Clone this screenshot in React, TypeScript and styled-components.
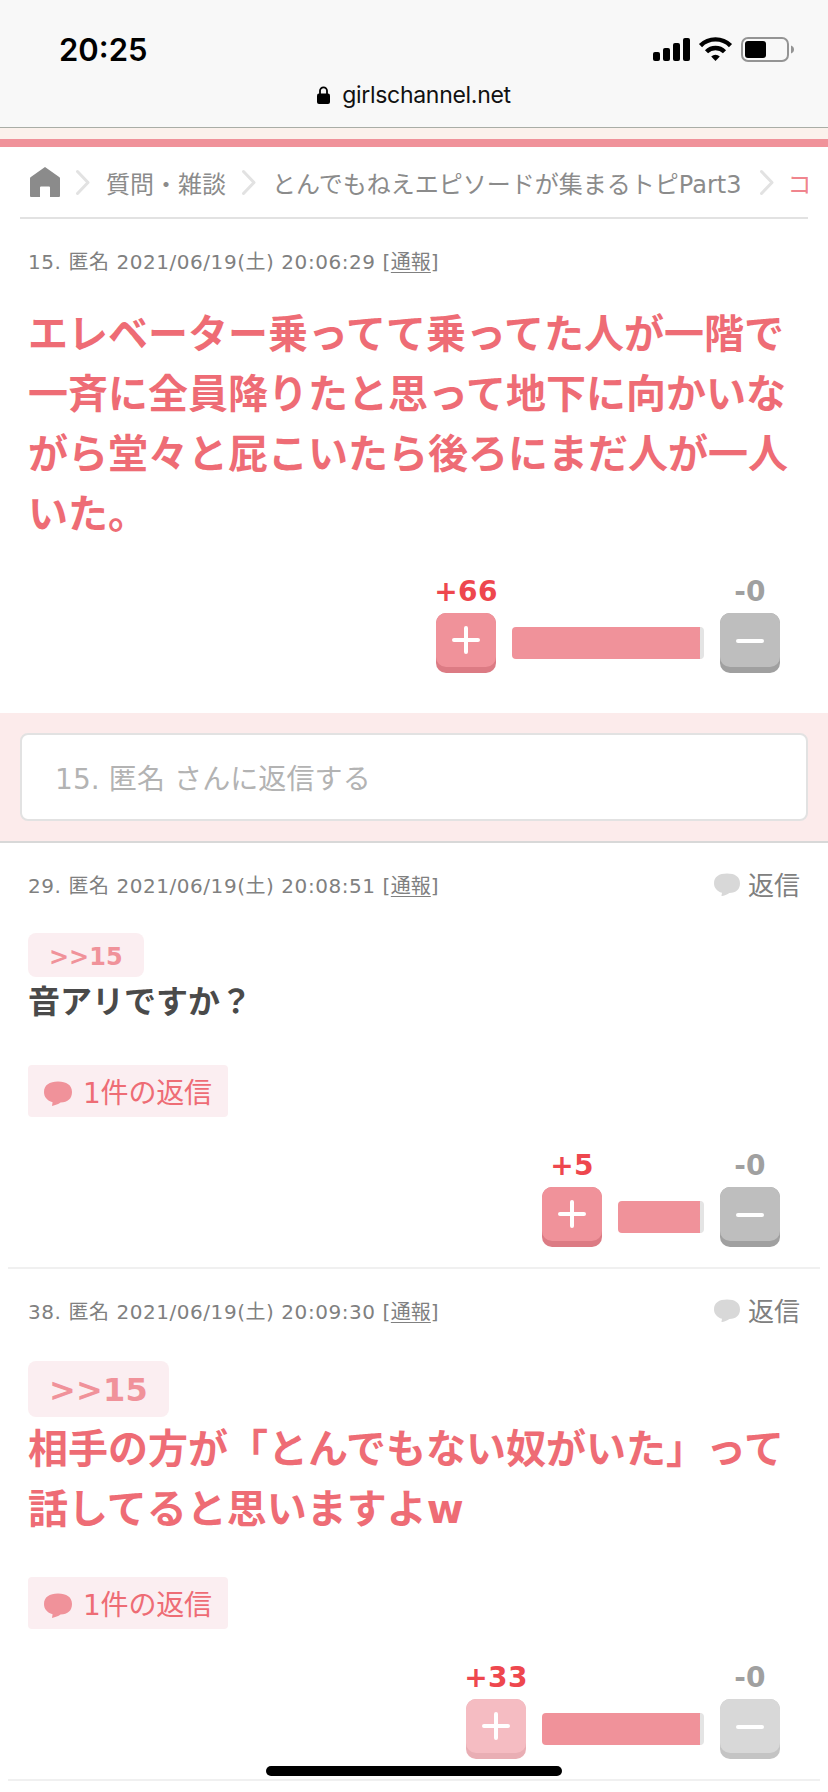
import React from "react";
import styled, { createGlobalStyle } from "styled-components";

const GlobalStyle = createGlobalStyle`
  * { box-sizing: border-box; }
  body {
    margin: 0;
    background: #fff;
    font-family: "DejaVu Sans", "Noto Sans CJK JP", sans-serif;
    -webkit-font-smoothing: antialiased;
  }
`;

const Page = styled.div`
  width: 828px;
  height: 1792px;
  overflow: hidden;
  position: relative;
  background: #fff;
`;

const BrowserHeader = styled.header`
  height: 128px;
  background: #f8f8f8;
  border-bottom: 1px solid #a9ada6;
  font-family: Inter, sans-serif;
  color: #000;
`;

const StatusBar = styled.div`
  height: 72px;
  padding: 30px 33px 0 59px;
  display: flex;
  justify-content: space-between;
  align-items: flex-start;
`;

const Clock = styled.span`
  font-size: 31px;
  font-weight: 600;
  line-height: 40px;
`;

const StatusIcons = styled.svg`
  display: block;
  margin-top: 6px;
`;

const AddressBar = styled.div`
  display: flex;
  justify-content: center;
  align-items: center;
  gap: 12px;
  height: 46px;
  font-size: 23px;
  letter-spacing: -0.3px;
  line-height: 46px;
  color: #111;
`;

const TopStripe = styled.div`
  height: 19px;
  background: #fbf1ec;
  border-bottom: 8px solid #f0929a;
`;

const Breadcrumbs = styled.nav`
  height: 72px;
  margin: 0 20px;
  padding: 0 0 0 10px;
  display: flex;
  align-items: center;
  border-bottom: 2px solid #e2e2e2;
  overflow: hidden;
  white-space: nowrap;
  font-size: 24px;
  line-height: 36px;
  color: #8b8b8b;
`;

const HomeIcon = styled.svg`
  flex: none;
`;

const Crumb = styled.span<{ $current?: boolean }>`
  flex: none;
  padding-top: 5px;
  color: ${(p) => (p.$current ? "#f0858e" : "#8b8b8b")};
`;

const CrumbChevron = styled.svg<{ $before: number; $after: number }>`
  flex: none;
  margin: 0 ${(p) => p.$after}px 0 ${(p) => p.$before}px;
`;

const Comment = styled.article<{ $height: number; $divider?: boolean }>`
  height: ${(p) => p.$height}px;
  margin: 0 8px;
  padding: 28px 20px 0;
  display: flex;
  flex-direction: column;
  align-items: flex-start;
  border-bottom: ${(p) => (p.$divider ? "2px solid #f0f0f0" : "none")};
`;

const MetaRow = styled.div`
  align-self: stretch;
  display: flex;
  justify-content: space-between;
  align-items: center;
  height: 30px;
  color: #808080;
`;

const Meta = styled.span`
  font-size: 20px;
  line-height: 30px;
  letter-spacing: 0.55px;
`;

const ReportLink = styled.a`
  letter-spacing: 0;
  text-decoration: underline;
  text-decoration-thickness: 1px;
  text-underline-offset: 3px;
`;

const ReplyLink = styled.a`
  display: flex;
  align-items: center;
  gap: 8px;
  font-size: 26px;
  line-height: 30px;

  svg {
    margin-bottom: 3px;
  }
`;

const Body = styled.p<{ $large?: boolean; $top: number }>`
  margin: ${(p) => p.$top}px 0 0;
  font-weight: 700;
  white-space: nowrap;
  font-size: ${(p) => (p.$large ? 40 : 32)}px;
  line-height: ${(p) => (p.$large ? 60 : 48)}px;
  color: ${(p) => (p.$large ? "#ee6c75" : "#4a4a4a")};
`;

const Anchor = styled.a<{ $large?: boolean }>`
  margin-top: ${(p) => (p.$large ? 34 : 32)}px;
  height: ${(p) => (p.$large ? 56 : 44)}px;
  padding: 0 21px;
  border-radius: 8px;
  background: #fbeef1;
  color: #f0929a;
  font-weight: 700;
  font-size: ${(p) => (p.$large ? 32 : 24)}px;
  letter-spacing: ${(p) => (p.$large ? 0.2 : 0)}px;
  line-height: ${(p) => (p.$large ? 58 : 48)}px;
`;

const Replies = styled.a<{ $top: number }>`
  margin-top: ${(p) => p.$top}px;
  height: 52px;
  width: 200px;
  padding: 5px 0 0 16px;
  display: flex;
  align-items: center;
  gap: 11px;
  border-radius: 4px;
  background: #fbeef1;
  color: #ee6c75;
  font-size: 28px;
  line-height: 46px;
  letter-spacing: -0.2px;
  white-space: nowrap;
`;

const Votes = styled.div`
  align-self: flex-end;
  margin: auto 20px 0 0;
  display: flex;
  align-items: flex-end;
  gap: 16px;
`;

const VoteColumn = styled.div`
  width: 60px;
  display: flex;
  flex-direction: column;
  align-items: center;
`;

const Count = styled.span<{ $plus?: boolean }>`
  font-size: 28px;
  font-weight: 700;
  line-height: 38px;
  height: 40px;
  letter-spacing: 0.3px;
  white-space: nowrap;
  color: ${(p) => (p.$plus ? "#ee474e" : "#a0a0a0")};
`;

const VoteButton = styled.button<{ $bg: string; $edge: string }>`
  width: 60px;
  height: 60px;
  padding: 0 0 6px;
  border: 0;
  border-radius: 10px;
  background: ${(p) => p.$edge};
  position: relative;
  display: flex;
  align-items: center;
  justify-content: center;

  &::before {
    content: "";
    position: absolute;
    inset: 0 0 6px;
    border-radius: 10px;
    background: ${(p) => p.$bg};
  }

  svg {
    position: relative;
  }
`;

const Meter = styled.div<{ $width: number }>`
  width: ${(p) => p.$width}px;
  height: 32px;
  margin-bottom: 14px;
  border-radius: 4px;
  background: #f0929a;
  border-right: 4px solid #e4e4e4;
`;

const ReplyArea = styled.section`
  height: 130px;
  padding: 20px 20px 0;
  background: #fcebeb;
  border-bottom: 2px solid #d8d8d8;
`;

const ReplyInput = styled.div`
  height: 88px;
  padding: 0 0 0 33px;
  border: 2px solid #e2e2e2;
  border-radius: 8px;
  background: #fff;
  color: #b3b3b3;
  font-size: 28px;
  line-height: 90px;
  letter-spacing: 0.1px;
`;

const HomeIndicator = styled.div`
  position: absolute;
  left: 266px;
  top: 1766px;
  width: 296px;
  height: 10px;
  border-radius: 5px;
  background: #000;
`;

const Bubble = ({ color, width }: { color: string; width: number }) => (
  <svg width={width} height={(width * 25) / 28} viewBox="0 0 28 25">
    <path
      d="M14 0.500C5.500 0.500 0 4 0 11c0 4.800 3 8.600 8.600 10.300L8 25c3.500-.8 6.200-1.700 8.500-3.500C24 21.300 28 17.500 28 11 28 4 22.500 0.500 14 0.500Z"
      fill={color}
    />
  </svg>
);

const Chevron = ({ before = 16, after = 16 }: { before?: number; after?: number }) => (
  <CrumbChevron $before={before} $after={after} width="14" height="26" viewBox="0 0 14 26">
    <path
      d="M1.500 2.500 12 13.500 1.500 24.500"
      fill="none"
      stroke="#e2e2e2"
      strokeWidth="3"
      strokeLinecap="round"
      strokeLinejoin="round"
    />
  </CrumbChevron>
);

const Header = () => (
  <BrowserHeader>
    <StatusBar>
      <Clock>20:25</Clock>
      <StatusIcons width="142" height="27" viewBox="0 0 142 27">
        <rect x="0" y="16" width="7" height="9" rx="2" />
        <rect x="10" y="12" width="7" height="13" rx="2" />
        <rect x="20" y="7" width="7" height="18" rx="2" />
        <rect x="30" y="2" width="7" height="23" rx="2" />
        <g fill="none" stroke="#000" strokeWidth="4.400">
          <path d="M47.500 9.600a21.300 21.300 0 0 1 30 0" />
          <path d="M53.500 15.700a12.800 12.800 0 0 1 18 0" />
        </g>
        <path d="m62.500 25-4.300-4.500a6.200 6.200 0 0 1 8.600 0Z" />
        <rect x="89" y="2" width="46" height="23" rx="6" fill="none" stroke="#949494" strokeWidth="2" />
        <rect x="92" y="5" width="21" height="17" rx="3" />
        <path d="M138 9.500c4 1.200 4 6.800 0 8Z" fill="#949494" />
      </StatusIcons>
    </StatusBar>
    <AddressBar>
      <svg width="13" height="18" viewBox="0 0 13 18">
        <rect y="7.500" width="13" height="10.500" rx="2" />
        <path d="M3 8V4.800a3.500 3.500 0 0 1 7 0V8" fill="none" stroke="#000" strokeWidth="1.800" />
      </svg>
      <span>girlschannel.net</span>
    </AddressBar>
  </BrowserHeader>
);

const MetaLine = ({ no, time, reply }: { no: number; time: string; reply?: boolean }) => (
  <MetaRow>
    <Meta>
      {no}. 匿名 2021/06/19(土) {time} [<ReportLink>通報</ReportLink>]
    </Meta>
    {reply && (
      <ReplyLink>
        <Bubble color="#d8d8d8" width={26} />
        返信
      </ReplyLink>
    )}
  </MetaRow>
);

const VoteRow = ({ plus, meter, voted }: { plus: number; meter: number; voted?: boolean }) => (
  <Votes>
    <VoteColumn>
      <Count $plus>+{plus}</Count>
      <VoteButton $bg={voted ? "#f5bcc2" : "#f0929a"} $edge={voted ? "#e9aeb4" : "#dc7b84"}>
        <svg width="28" height="28" viewBox="0 0 28 28">
          <path d="M2 14H26M14 2V26" stroke="#fff" strokeWidth="4" strokeLinecap="round" />
        </svg>
      </VoteButton>
    </VoteColumn>
    <Meter $width={meter} />
    <VoteColumn>
      <Count>-0</Count>
      <VoteButton $bg={voted ? "#d8d8d8" : "#bebebe"} $edge={voted ? "#c4c4c4" : "#a0a0a0"}>
        <svg width="28" height="28" viewBox="0 0 28 28">
          <path d="M2 15H26" stroke="#fff" strokeWidth="4" strokeLinecap="round" />
        </svg>
      </VoteButton>
    </VoteColumn>
  </Votes>
);

const CommentEnd = styled.div<{ $height: number }>`
  flex: none;
  height: ${(p) => p.$height}px;
`;

export default function App() {
  return (
    <Page>
      <GlobalStyle />
      <Header />
      <TopStripe />
      <Breadcrumbs>
        <HomeIcon width="30" height="30" viewBox="0 0 30 30">
          <path
            d="M15 0 .5 10.200Q0 10.600 0 11.500V29Q0 30 1 30H10V20.500Q10 19.500 11 19.500h8Q20 19.500 20 20.500V30h9Q30 30 30 29v-17.500Q30 10.600 29.500 10.200Z"
            fill="#8b8b8b"
          />
        </HomeIcon>
        <Chevron />
        <Crumb>質問・雑談</Crumb>
        <Chevron />
        <Crumb>とんでもねえエピソードが集まるトピPart3</Crumb>
        <Chevron before={19} after={13} />
        <Crumb $current>コ</Crumb>
      </Breadcrumbs>

      <Comment $height={494}>
        <MetaLine no={15} time="20:06:29" />
        <Body $large $top={27}>
          エレベーター乗ってて乗ってた人が一階で
          <br />
          一斉に全員降りたと思って地下に向かいな
          <br />
          がら堂々と屁こいたら後ろにまだ人が一人
          <br />
          いた。
        </Body>
        <VoteRow plus={66} meter={192} />
        <CommentEnd $height={40} />
      </Comment>

      <ReplyArea>
        <ReplyInput>15. 匿名 さんに返信する</ReplyInput>
      </ReplyArea>

      <Comment $height={426} $divider>
        <MetaLine no={29} time="20:08:51" reply />
        <Anchor>&gt;&gt;15</Anchor>
        <Body $top={1}>音アリですか？</Body>
        <Replies $top={39}>
          <Bubble color="#f0929a" width={28} />
          1件の返信
        </Replies>
        <VoteRow plus={5} meter={86} />
        <CommentEnd $height={20} />
      </Comment>

      <Comment $height={512} $divider>
        <MetaLine no={38} time="20:09:30" reply />
        <Anchor $large>&gt;&gt;15</Anchor>
        <Body $large $top={2}>
          相手の方が「とんでもない奴がいた」って
          <br />
          話してると思いますよw
        </Body>
        <Replies $top={38}>
          <Bubble color="#f0929a" width={28} />
          1件の返信
        </Replies>
        <VoteRow plus={33} meter={162} voted />
        <CommentEnd $height={20} />
      </Comment>
      <HomeIndicator />
    </Page>
  );
}
